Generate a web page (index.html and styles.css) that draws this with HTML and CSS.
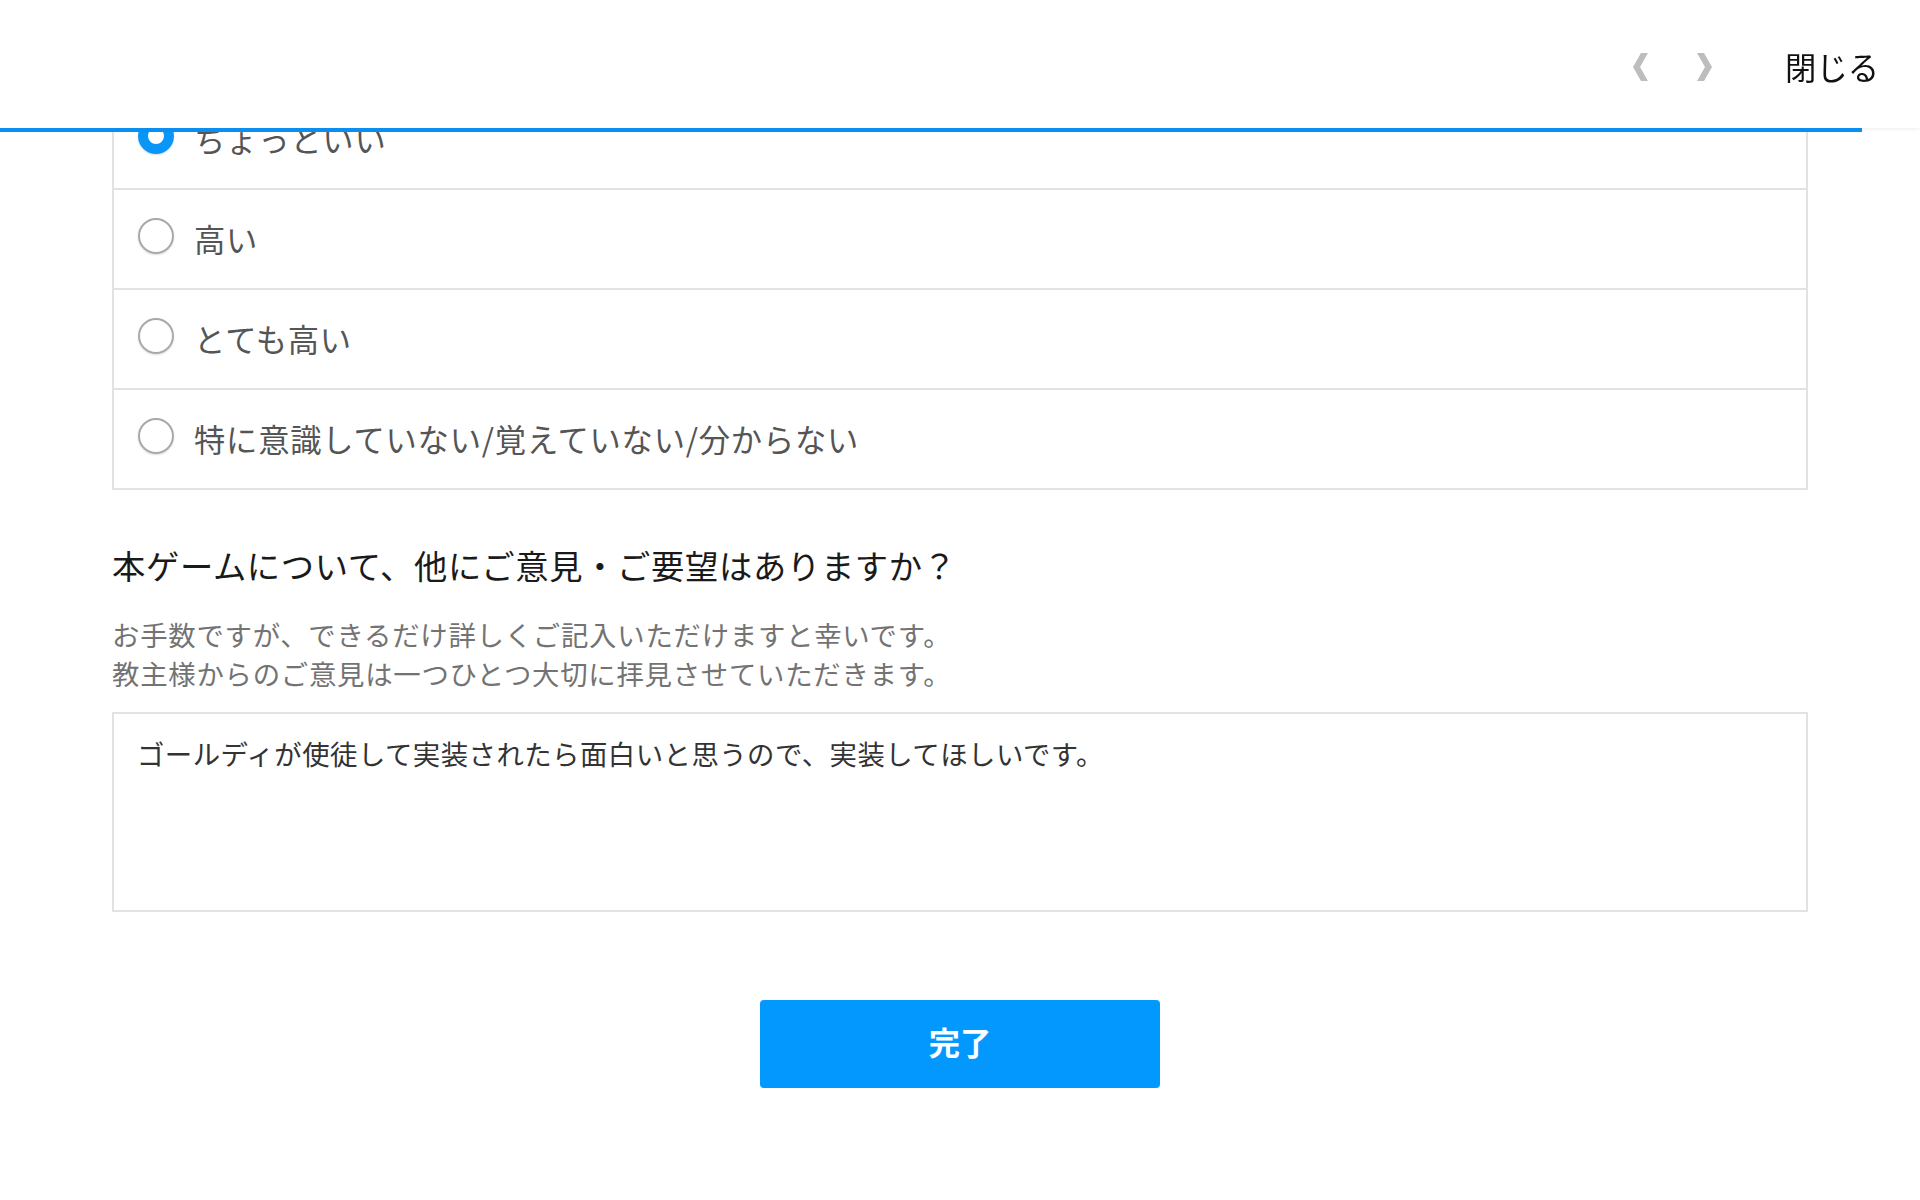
FILE: index.html
```html
<!DOCTYPE html>
<html lang="ja">
<head>
<meta charset="utf-8">
<title>アンケート</title>
<link rel="stylesheet" href="styles.css">
</head>
<body>
<header class="topbar">
  <div class="topbar-inner">
    <nav class="pager">
      <button class="pager-btn pager-prev" aria-label="前へ">
        <svg width="15" height="28" viewBox="0 0 15 28"><polygon points="15,0 8,0 0,14 8,28 15,28 7,14" fill="#bdbdbd"/></svg>
      </button>
      <button class="pager-btn pager-next" aria-label="次へ">
        <svg width="15" height="28" viewBox="0 0 15 28"><polygon points="0,0 7,0 15,14 7,28 0,28 8,14" fill="#bdbdbd"/></svg>
      </button>
    </nav>
    <button class="close-btn">閉じる</button>
  </div>
  <div class="progress"><div class="progress-fill" style="width:97%"></div></div>
</header>

<main class="content">
  <ul class="options">
    <li class="option is-selected"><span class="radio"></span><span class="option-label">ちょっといい</span></li>
    <li class="option"><span class="radio"></span><span class="option-label">高い</span></li>
    <li class="option"><span class="radio"></span><span class="option-label">とても高い</span></li>
    <li class="option"><span class="radio"></span><span class="option-label">特に意識していない/覚えていない/分からない</span></li>
  </ul>

  <section class="question">
    <h2 class="question-title">本ゲームについて、他にご意見・ご要望はありますか？</h2>
    <p class="question-note">お手数ですが、できるだけ詳しくご記入いただけますと幸いです。<br>教主様からのご意見は一つひとつ大切に拝見させていただきます。</p>
    <div class="answer">ゴールディが使徒して実装されたら面白いと思うので、実装してほしいです。</div>
  </section>

  <div class="actions">
    <button class="done-btn">完了</button>
  </div>
</main>
</body>
</html>
```

FILE: styles.css
```css
* { box-sizing: border-box; }

html, body {
  margin: 0;
  padding: 0;
  background: #ffffff;
}

body {
  font-family: "Noto Sans CJK JP", "Noto Sans", sans-serif;
  color: #222;
}

.topbar {
  position: fixed;
  top: 0;
  left: 0;
  right: 0;
  z-index: 10;
}

.topbar-inner {
  height: 128px;
  background: #fff;
  display: flex;
  align-items: center;
  justify-content: flex-end;
  padding: 6px 41px 0 0;
  box-shadow: 0 1px 4px rgba(0, 0, 0, 0.08);
}

.pager {
  display: flex;
  align-items: center;
  gap: 49px;
  margin-right: 73px;
}

.pager-btn {
  border: 0;
  background: none;
  padding: 0;
  width: 15px;
  height: 28px;
  display: block;
}

.pager-btn svg { display: block; }

.close-btn {
  border: 0;
  background: none;
  padding: 0;
  font-family: inherit;
  font-size: 31.3px;
  line-height: 1.4;
  color: #111;
}

.progress {
  height: 4px;
  background: transparent;
}

.progress-fill {
  height: 4px;
  background: #0a8ff0;
}

.content {
  padding: 88px 112px 120px;
}

.options {
  list-style: none;
  margin: 0;
  padding: 0;
  border: 2px solid #e2e2e2;
}

.option {
  height: 98px;
  display: flex;
  align-items: center;
  padding-left: 24px;
}

.option + .option {
  height: 100px;
  border-top: 2px solid #e2e2e2;
}

.radio {
  width: 36px;
  height: 36px;
  border-radius: 50%;
  border: 2px solid #a9a9a9;
  box-shadow: 0 1px 2px rgba(0, 0, 0, 0.12);
  flex: none;
  margin-bottom: 6px;
}

.is-selected .radio {
  border: 10px solid #0996f6;
  box-shadow: 0 1px 2px rgba(0, 0, 0, 0.15);
}

.option-label {
  margin-left: 20px;
  font-size: 31.3px;
  line-height: 1.4;
  letter-spacing: 0.025em;
  color: #555;
}

.question-title {
  margin: 50px 0 0;
  font-size: 33.3px;
  line-height: 50px;
  font-weight: 400;
  letter-spacing: 0.02em;
  color: #1a1a1a;
}

.question-note {
  margin: 25px 0 0;
  font-size: 27.4px;
  line-height: 39.2px;
  letter-spacing: 0.027em;
  color: #737373;
}

.answer {
  margin-top: 19px;
  height: 200px;
  border: 2px solid #e2e2e2;
  padding: 20px 23px;
  font-size: 27.4px;
  line-height: 39.2px;
  letter-spacing: 0.017em;
  color: #333;
}

.actions {
  display: flex;
  justify-content: center;
  margin-top: 88px;
}

.done-btn {
  width: 400px;
  height: 88px;
  border: 0;
  border-radius: 4px;
  padding: 0 0 5px;
  background: #0398fe;
  color: #fff;
  font-family: inherit;
  font-size: 31.3px;
  font-weight: 700;
}
```
